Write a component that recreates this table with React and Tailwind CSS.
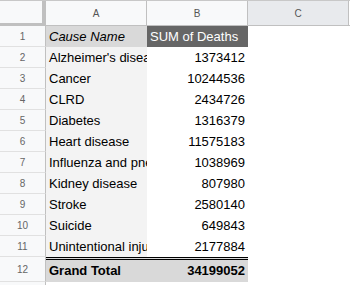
const rows = [
  ["Alzheimer's disease", "1373412"],
  ["Cancer", "10244536"],
  ["CLRD", "2434726"],
  ["Diabetes", "1316379"],
  ["Heart disease", "11575183"],
  ["Influenza and pneumonia", "1038969"],
  ["Kidney disease", "807980"],
  ["Stroke", "2580140"],
  ["Suicide", "649843"],
  ["Unintentional injuries", "2177884"],
];

function RowNum({ n, h = "h-[21px]" }) {
  return (
    <div
      className={`${h} w-[46px] shrink-0 flex items-center justify-center bg-[#f8f9fa] border-r border-b border-[#c0c0c0] border-b-[#e1e1e1] text-[10px] text-[#666]`}
    >
      {n}
    </div>
  );
}

export default function App() {
  return (
    <div
      className="w-[350px] h-[285px] overflow-hidden bg-white text-[13px] text-black"
      style={{ fontFamily: '"Liberation Sans", Arial, sans-serif' }}
    >
      {/* column headers */}
      <div className="flex h-[26px] border-t border-[#c8c8c8]">
        <div className="w-[46px] shrink-0 bg-[#f8f9fa] border-r-[4px] border-b-[3px] border-[#c0c0c0]" />
        <div className="w-[101px] shrink-0 flex items-center justify-center bg-[#f8f9fa] border-r border-b border-[#c0c0c0] text-[10px] text-[#555]">
          A
        </div>
        <div className="w-[101px] shrink-0 flex items-center justify-center bg-[#f8f9fa] border-r border-b border-[#c0c0c0] text-[10px] text-[#555]">
          B
        </div>
        <div className="w-[101px] shrink-0 flex items-center justify-center bg-[#e8eaed] border-r border-b border-[#c0c0c0] text-[10px] text-[#555]">
          C
        </div>
        <div className="flex-1 bg-white border-b border-[#c0c0c0]" />
      </div>

      {/* row 1 header */}
      <div className="flex">
        <RowNum n={1} />
        <div className="w-[101px] shrink-0 h-[21px] flex items-center pl-[3px] bg-[#d9d9d9] italic whitespace-nowrap overflow-hidden">
          Cause Name
        </div>
        <div className="w-[101px] shrink-0 h-[21px] flex items-center pl-[3px] bg-[#666666] text-white whitespace-nowrap overflow-hidden">
          SUM of Deaths
        </div>
      </div>

      {rows.map((r, i) => (
        <div key={r[0]} className="flex">
          <RowNum n={i + 2} />
          <div className="w-[101px] shrink-0 h-[21px] flex items-center pl-[3px] bg-[#f3f3f3] whitespace-nowrap overflow-hidden">
            {r[0]}
          </div>
          <div className="w-[101px] shrink-0 h-[21px] flex items-center justify-end pr-[3px] bg-white">
            {r[1]}
          </div>
        </div>
      ))}

      {/* grand total */}
      <div className="flex">
        <RowNum n={12} h="h-[25px]" />
        <div className="w-[202px] shrink-0 flex border-t-[3px] border-double border-black bg-[#d9d9d9] font-bold">
          <div className="w-[101px] h-[21px] flex items-center pl-[3px] whitespace-nowrap">
            Grand Total
          </div>
          <div className="w-[101px] h-[21px] flex items-center justify-end pr-[3px]">
            34199052
          </div>
        </div>
      </div>
      <div className="flex">
        <RowNum n="" />
      </div>
    </div>
  );
}
